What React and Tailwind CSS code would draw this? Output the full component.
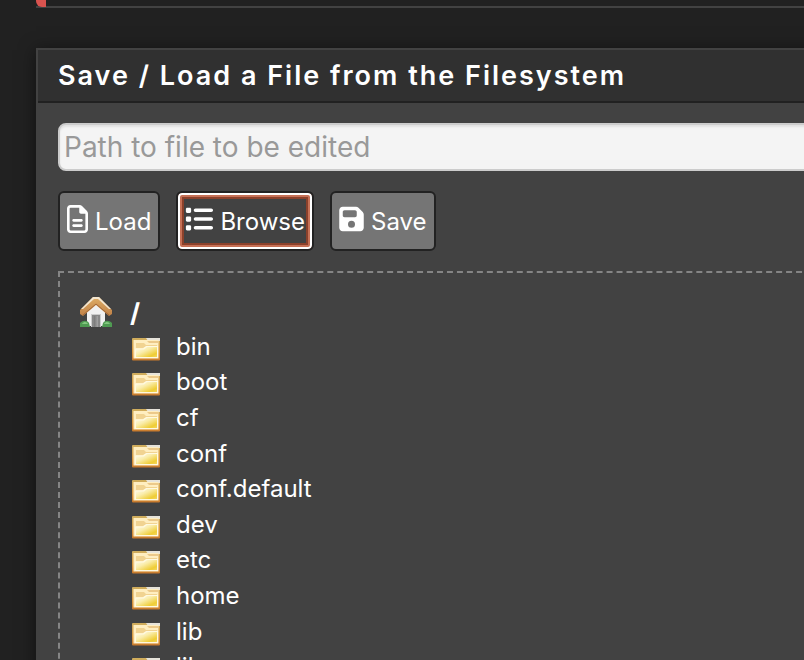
import React from "react";
import { FaRegFileLines, FaList, FaFloppyDisk } from "react-icons/fa6";

const folders = ["bin", "boot", "cf", "conf", "conf.default", "dev", "etc", "home", "lib", "libexec"];

function FolderIcon() {
  return (
    <svg viewBox="0 0 30 24" className="h-6 w-[30px] shrink-0" aria-hidden="true">
      <defs>
        <linearGradient id="folderEdge" x1="0" y1="0" x2="0" y2="1">
          <stop offset="0" stopColor="#cfae5e" />
          <stop offset="0.6" stopColor="#d9983f" />
          <stop offset="1" stopColor="#c97a2c" />
        </linearGradient>
        <linearGradient id="folderFace" x1="0" y1="0" x2="1" y2="1">
          <stop offset="0" stopColor="#fffdf0" />
          <stop offset="0.4" stopColor="#faedac" />
          <stop offset="0.8" stopColor="#efcd35" />
          <stop offset="1" stopColor="#f3d65c" />
        </linearGradient>
      </defs>
      <rect x="1" y="1" width="28" height="22.5" rx="1" fill="url(#folderEdge)" />
      <path d="M15 1h14v3H17z" fill="#e6e3da" />
      <rect x="2.5" y="3" width="25" height="18.5" fill="#ffeec0" />
      <path d="M16 4h11v2H18z" fill="#ecc98a" />
      <path d="M5 6h8l2 2h11v2H14l-2 1H5z" fill="#f1d391" />
      <path d="M4 11.5h8l3-2.5h12v12H4z" fill="#fff9e0" />
      <path d="M5 12.5h8l3-2.5h10v10H5z" fill="url(#folderFace)" />
    </svg>
  );
}

function HomeIcon() {
  return (
    <svg viewBox="0 0 32 32" className="size-8 shrink-0" aria-hidden="true">
      <defs>
        <linearGradient id="homeRoof" x1="0" y1="0" x2="0" y2="1">
          <stop offset="0" stopColor="#dfae66" />
          <stop offset="1" stopColor="#c08046" />
        </linearGradient>
        <linearGradient id="homeDoor" x1="0" y1="0" x2="1" y2="0">
          <stop offset="0" stopColor="#777" />
          <stop offset="1" stopColor="#a5a5a5" />
        </linearGradient>
      </defs>
      <path d="M7 15l9-8 9 8v15H7z" fill="#f1f1f1" />
      <path d="M0 31v-4c3-3 7-3 9 0l1 4z" fill="#4f9b52" />
      <path d="M22 31l1-4c2-3 6-3 9 0v4z" fill="#4f9b52" />
      <path d="M2 28c2-3 5-2 6 0zM24 28c2-3 5-2 6 0z" fill="#83c77f" />
      <rect x="11" y="18" width="10" height="13" fill="#ccc" />
      <rect x="12" y="19" width="8" height="12" fill="#888" />
      <rect x="14" y="20" width="4" height="11" fill="url(#homeDoor)" />
      <path d="M13 1h6l13 13v4l-3 2L16 9 3 20l-3-2v-4z" fill="url(#homeRoof)" />
      <path d="M13 1h6l12 12h-2L18 3h-4L3 13H1z" fill="#f3e6d0" />
      <path d="M3 19L16 8l13 11" fill="none" stroke="#a56a38" strokeWidth="1" />
    </svg>
  );
}

function ToolButton({ icon, label, active }) {
  const look = active
    ? "bg-[#424242] shadow-[inset_0_0_0_2px_#fff,inset_0_0_0_4px_#c67055,inset_0_0_0_6px_#8b412b]"
    : "bg-[#757575]";
  return (
    <button
      type="button"
      className={`flex h-[60px] items-center gap-[7px] rounded-md border-2 border-[#222] px-[7px] text-2xl text-white outline-none ${look}`}
    >
      {icon}
      <span className="pt-0.5">{label}</span>
    </button>
  );
}

export default function App() {
  return (
    <div className="h-screen overflow-hidden bg-[#212121] pl-9 font-['Inter','Liberation_Sans',sans-serif] text-white">
      <div className="flex h-2 items-start border-b-2 border-[#424242]">
        <div className="h-[7px] w-2.5 shrink-0 rounded-bl-md bg-[#d9534f]" />
      </div>
      <section className="-mr-10 mt-10 border-2 border-[#424242] bg-[#424242] shadow-[0_2px_16px_rgba(0,0,0,0.5)]">
        <header className="border-b-2 border-[#212121] bg-[#303030] px-5">
          <h2 className="text-[27px] leading-[51px] font-semibold tracking-[2px]">
            Save / Load a File from the Filesystem
          </h2>
        </header>
        <div className="p-5">
          <input
            type="text"
            aria-label="Path to file to be edited"
            placeholder="Path to file to be edited"
            className="block h-12 w-full rounded-lg border-2 border-[#ccc] bg-[#f4f4f4] px-1 text-[28px] text-[#333] shadow-[inset_0_2px_2px_rgba(0,0,0,0.08)] outline-none placeholder:text-[#999]"
          />
          <div className="mt-5 flex gap-4">
            <ToolButton label="Load" icon={<FaRegFileLines className="mb-1 h-7 w-[21px]" />} />
            <ToolButton label="Browse" active icon={<FaList className="mb-1 size-7" />} />
            <ToolButton label="Save" icon={<FaFloppyDisk className="mb-1 h-7 w-[25px]" />} />
          </div>
          <div className="mt-5 border-2 border-dashed border-[#858585] p-5">
            <div className="flex h-[38px] items-center gap-[18px]">
              <HomeIcon />
              <button type="button" className="text-[26px] font-bold">/</button>
            </div>
            <ul className="grid h-[356px] grid-rows-10 pl-[51px] text-2xl">
              {folders.map((name) => (
                <li key={name} className="flex items-center gap-[15px]">
                  <FolderIcon />
                  <span className="pb-1">{name}</span>
                </li>
              ))}
            </ul>
          </div>
        </div>
      </section>
    </div>
  );
}
